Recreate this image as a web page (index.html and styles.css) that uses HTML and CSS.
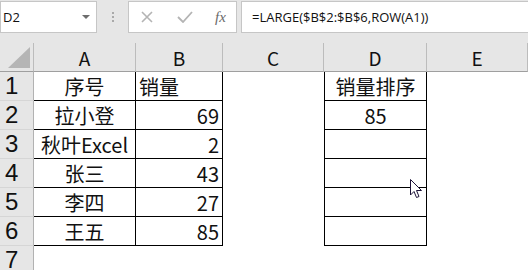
FILE: index.html
```html
<!DOCTYPE html>
<html lang="zh-CN">
<head>
    <meta charset="UTF-8">
    <title>销量排序</title>
    <link rel="stylesheet" href="styles.css">
</head>
<body>
    <div class="toolbar">
        <div class="namebox">
            <span>D2</span>
            <svg class="caret" width="8" height="5" viewBox="0 0 8 5"><path d="M0 0 H8 L4 4 Z" fill="#6d6d6d"/></svg>
        </div>
        <div class="grip"><i></i><i></i><i></i></div>
        <div class="fxbuttons">
            <svg width="12" height="12" viewBox="0 0 12 12"><path d="M1 1 L11 11 M11 1 L1 11" stroke="#b4b4b4" stroke-width="1.6"/></svg>
            <svg width="16" height="12" viewBox="0 0 16 12"><path d="M1 6 L6 11 L15 1" stroke="#b4b4b4" stroke-width="1.8" fill="none"/></svg>
            <span class="fx">fx</span>
        </div>
        <div class="formula">=LARGE($B$2:$B$6,ROW(A1))</div>
    </div>

    <div class="sheet">
        <div class="corner"><svg width="22" height="21" viewBox="0 0 22 21"><path d="M22 0 V21 H0 Z" fill="#b5b5b5"/></svg></div>
        <div class="colhead">A</div>
        <div class="colhead">B</div>
        <div class="colhead">C</div>
        <div class="colhead">D</div>
        <div class="colhead">E</div>

        <div class="rowhead">1</div>
        <div class="cell ca center">序号</div>
        <div class="cell cb">销量</div>
        <div class="cell"></div>
        <div class="cell cd center">销量排序</div>
        <div class="cell"></div>

        <div class="rowhead">2</div>
        <div class="cell ca center">拉小登</div>
        <div class="cell cb right">69</div>
        <div class="cell"></div>
        <div class="cell cd center">85</div>
        <div class="cell"></div>

        <div class="rowhead">3</div>
        <div class="cell ca center">秋叶Excel</div>
        <div class="cell cb right">2</div>
        <div class="cell"></div>
        <div class="cell cd"></div>
        <div class="cell"></div>

        <div class="rowhead">4</div>
        <div class="cell ca center">张三</div>
        <div class="cell cb right">43</div>
        <div class="cell"></div>
        <div class="cell cd"></div>
        <div class="cell"></div>

        <div class="rowhead">5</div>
        <div class="cell ca center">李四</div>
        <div class="cell cb right">27</div>
        <div class="cell"></div>
        <div class="cell cd"></div>
        <div class="cell"></div>

        <div class="rowhead">6</div>
        <div class="cell ca center">王五</div>
        <div class="cell cb right">85</div>
        <div class="cell"></div>
        <div class="cell cd"></div>
        <div class="cell"></div>

        <div class="rowhead">7</div>
        <div class="cell"></div>
        <div class="cell"></div>
        <div class="cell"></div>
        <div class="cell"></div>
        <div class="cell"></div>
    </div>

    <svg class="pointer" width="14" height="21" viewBox="0 0 14 21">
        <path d="M0.5 0.5 V16 L4 12.5 L6.5 18.5 L9 17.5 L6.5 11.5 L11.5 11.5 Z" fill="#fff" stroke="#1d1238" stroke-width="1"/>
    </svg>
</body>
</html>
```

FILE: styles.css
```css
* {
    margin: 0;
    padding: 0;
    box-sizing: border-box;
}

body {
    width: 528px;
    height: 270px;
    overflow: hidden;
    background: #e6e6e6;
    position: relative;
    font-family: "Noto Sans CJK SC", "Noto Sans", sans-serif;
    color: #111;
}

.toolbar {
    display: flex;
    height: 33px;
    padding-top: 1px;
    margin-bottom: 10px;
}

.namebox {
    width: 97px;
    background: #fff;
    border: 1px solid #c6c6c6;
    display: flex;
    align-items: center;
    justify-content: space-between;
    padding: 0 6px 0 2px;
    font-family: "Open Sans", sans-serif;
    font-size: 13px;
}

.caret {
    margin-top: 1px;
}

.grip {
    width: 31px;
    display: flex;
    flex-direction: column;
    align-items: center;
    justify-content: center;
    gap: 2px;
}

.grip i {
    width: 2px;
    height: 2px;
    background: #a9a9a9;
}

.fxbuttons {
    width: 109px;
    background: #fff;
    border: 1px solid #c6c6c6;
    display: flex;
    align-items: center;
    padding-left: 12px;
    gap: 24px;
}

.fx {
    font-family: "Liberation Serif", serif;
    font-style: italic;
    font-size: 15px;
    color: #6a6a6a;
    margin-left: -2px;
}

.formula {
    flex: 1;
    margin-left: 4px;
    margin-right: -2px;
    background: #fff;
    border: 1px solid #c6c6c6;
    padding-left: 10px;
    line-height: 30px;
    font-family: "Open Sans", sans-serif;
    font-size: 13px;
}

.sheet {
    display: grid;
    grid-template-columns: 34px 102px 87px 101px 103px 101px;
    grid-auto-rows: 29px;
    background: #fff;
}

.corner,
.colhead {
    background: #e6e6e6;
    border-right: 1px solid #bcbcbc;
    border-bottom: 1px solid #9f9f9f;
}

.corner {
    padding: 4px 0 0 8px;
}

.colhead {
    text-align: center;
    font-size: 19px;
    line-height: 30px;
}

.rowhead {
    background: #e6e6e6;
    border-right: 1px solid #b2b2b2;
    border-bottom: 1px solid #d6d6d6;
    padding-left: 5px;
    font-family: "Liberation Sans", sans-serif;
    font-size: 24px;
    line-height: 28px;
}

.cell {
    font-size: 20px;
    line-height: 29px;
    padding: 0 3px;
    white-space: nowrap;
    overflow: hidden;
}

.center {
    text-align: center;
    padding: 0;
}

.right {
    text-align: right;
}

.ca,
.cb {
    border-right: 1px solid #000;
    border-bottom: 1px solid #000;
}

.cd {
    border-left: 1px solid #000;
    border-right: 1px solid #000;
    border-bottom: 1px solid #000;
}

.pointer {
    position: absolute;
    left: 410px;
    top: 179px;
}
```
